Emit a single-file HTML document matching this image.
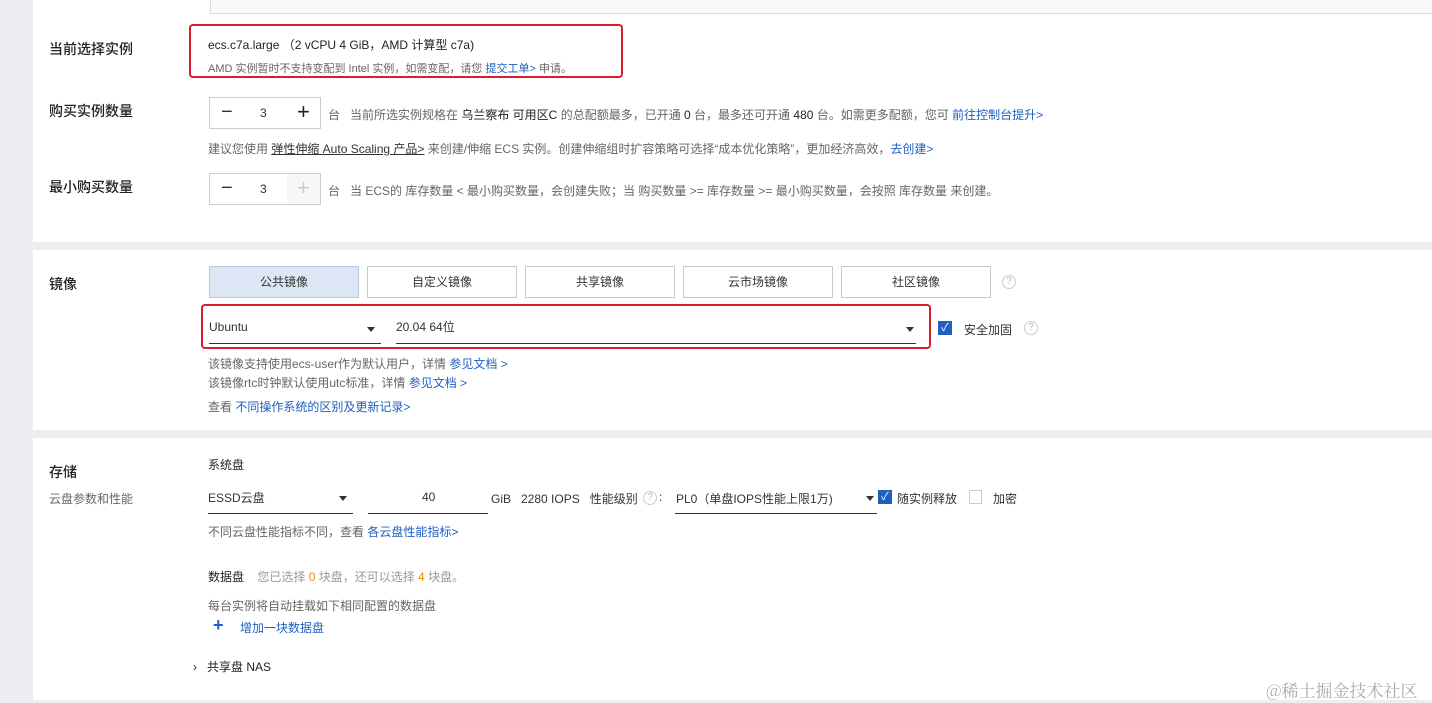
<!DOCTYPE html>
<html><head><meta charset="utf-8"><style>
*{margin:0;padding:0;box-sizing:border-box}
body{width:1432px;height:703px;background:#eceef1;position:relative;overflow:hidden;font-family:"Liberation Sans","Noto Sans CJK SC",sans-serif;color:#333;font-size:12px}
.p{position:absolute;left:33px;width:1399px;background:#fff}
.a{position:absolute;white-space:nowrap}
.lbl{font-size:14px;color:#222;font-weight:500}
.g{color:#666}
.b{color:#1f5fbf}
.btn{position:absolute;height:32px;border:1px solid #c8c8c8;background:#fff;text-align:center;line-height:30px;font-size:12px;color:#333}
.sel{position:absolute;border-bottom:1px solid #333;height:30px;line-height:26px;font-size:12px}
.tri{position:absolute;width:0;height:0;border-left:4px solid transparent;border-right:4px solid transparent;border-top:5px solid #333}
.q{position:absolute;width:14px;height:14px;border:1px solid #ccc;border-radius:50%;font-size:10px;color:#bbb;text-align:center;line-height:12px}
.cb{position:absolute;width:14px;height:14px;background:#1f5fbf;color:#fff;font-size:11px;line-height:14px;text-align:center}
.red{position:absolute;border:2px solid #d9202a;border-radius:4px}
</style></head><body>
<div class="p" style="top:0;height:242px">
  <div class="a" style="left:177px;top:-2px;width:1230px;height:16px;border:1px solid #ddd;border-top:none;background:#fafafa"></div>
  <div class="a lbl" style="left:16px;top:39px">当前选择实例</div>
  <div class="a" style="left:175px;top:36px;font-size:12px;color:#222">ecs.c7a.large （2 vCPU 4 GiB，AMD 计算型 c7a)</div>
  <div class="a g" style="left:175px;top:60px;font-size:11px">AMD 实例暂时不支持变配到 Intel 实例，如需变配，请您 <span class="b">提交工单&gt;</span> 申请。</div>
  <div class="red" style="left:156px;top:24px;width:434px;height:54px"></div>

  <div class="a lbl" style="left:16px;top:101px">购买实例数量</div>
  <div class="a" style="left:176px;top:97px;width:112px;height:32px;border:1px solid #ccc"></div>
  <div class="a" style="left:188px;top:101px;font-size:20px;color:#333">−</div>
  <div class="a" style="left:227px;top:106px">3</div>
  <div class="a" style="left:264px;top:99px;font-size:22px;color:#222">+</div>
  <div class="a g" style="left:295px;top:106px">台 &nbsp;&nbsp;当前所选实例规格在 <span style="color:#222">乌兰察布 可用区C</span> 的总配额最多，已开通 <span style="color:#222">0</span> 台，最多还可开通 <span style="color:#222">480</span> 台。如需更多配额，您可 <span class="b">前往控制台提升&gt;</span></div>
  <div class="a g" style="left:175px;top:140px">建议您使用 <span style="text-decoration:underline;color:#333">弹性伸缩 Auto Scaling 产品&gt;</span> 来创建/伸缩 ECS 实例。创建伸缩组时扩容策略可选择“成本优化策略”，更加经济高效，<span class="b">去创建&gt;</span></div>

  <div class="a lbl" style="left:16px;top:177px">最小购买数量</div>
  <div class="a" style="left:176px;top:173px;width:112px;height:32px;border:1px solid #ccc"></div>
  <div class="a" style="left:254px;top:174px;width:33px;height:30px;background:#f7f7f7"></div>
  <div class="a" style="left:188px;top:177px;font-size:20px;color:#333">−</div>
  <div class="a" style="left:227px;top:182px">3</div>
  <div class="a" style="left:264px;top:175px;font-size:22px;color:#ccc">+</div>
  <div class="a g" style="left:295px;top:182px">台 &nbsp;&nbsp;当 ECS的 库存数量 &lt; 最小购买数量，会创建失败；当 购买数量 &gt;= 库存数量 &gt;= 最小购买数量，会按照 库存数量 来创建。</div>
</div>

<div class="p" style="top:250px;height:180px">
  <div class="a lbl" style="left:16px;top:24px">镜像</div>
  <div class="btn" style="left:176px;top:16px;width:150px;background:#dde6f4;border-color:#b8c8e0">公共镜像</div>
  <div class="btn" style="left:334px;top:16px;width:150px">自定义镜像</div>
  <div class="btn" style="left:492px;top:16px;width:150px">共享镜像</div>
  <div class="btn" style="left:650px;top:16px;width:150px">云市场镜像</div>
  <div class="btn" style="left:808px;top:16px;width:150px">社区镜像</div>
  <div class="q" style="left:969px;top:25px">?</div>
  <div class="red" style="left:168px;top:54px;width:730px;height:45px"></div>
  <div class="sel" style="left:176px;top:64px;width:172px">Ubuntu</div>
  <div class="tri" style="left:334px;top:77px"></div>
  <div class="sel" style="left:363px;top:64px;width:520px">20.04 64位</div>
  <div class="tri" style="left:873px;top:77px"></div>
  <div class="cb" style="left:905px;top:71px">✓</div>
  <div class="a" style="left:931px;top:71px">安全加固</div>
  <div class="q" style="left:991px;top:71px">?</div>
  <div class="a g" style="left:175px;top:105px">该镜像支持使用ecs-user作为默认用户，详情 <span class="b">参见文档 &gt;</span></div>
  <div class="a g" style="left:175px;top:124px">该镜像rtc时钟默认使用utc标准，详情 <span class="b">参见文档 &gt;</span></div>
  <div class="a g" style="left:175px;top:148px">查看 <span class="b">不同操作系统的区别及更新记录&gt;</span></div>
</div>

<div class="p" style="top:438px;height:262px">
  <div class="a lbl" style="left:16px;top:24px">存储</div>
  <div class="a g" style="left:16px;top:52px">云盘参数和性能</div>
  <div class="a" style="left:175px;top:18px;color:#222">系统盘</div>
  <div class="a" style="left:175px;top:51px">ESSD云盘</div>
  <div class="a" style="left:175px;top:75px;width:145px;border-bottom:1px solid #333"></div>
  <div class="tri" style="left:306px;top:58px"></div>
  <div class="a" style="left:335px;top:75px;width:120px;border-bottom:1px solid #333"></div>
  <div class="a" style="left:389px;top:52px">40</div>
  <div class="a" style="left:458px;top:52px">GiB &nbsp;&nbsp;2280 IOPS &nbsp;&nbsp;性能级别</div>
  <div class="q" style="left:610px;top:53px">?</div>
  <div class="a" style="left:626px;top:52px">:</div>
  <div class="a" style="left:643px;top:52px">PL0（单盘IOPS性能上限1万)</div>
  <div class="a" style="left:642px;top:75px;width:202px;border-bottom:1px solid #333"></div>
  <div class="tri" style="left:833px;top:58px"></div>
  <div class="cb" style="left:845px;top:52px">✓</div>
  <div class="a" style="left:864px;top:52px">随实例释放</div>
  <div class="a" style="left:936px;top:52px;width:13px;height:14px;border:1px solid #ccc"></div>
  <div class="a" style="left:960px;top:52px">加密</div>
  <div class="a g" style="left:175px;top:85px">不同云盘性能指标不同，查看 <span class="b">各云盘性能指标&gt;</span></div>
  <div class="a" style="left:175px;top:130px;color:#222">数据盘 <span style="color:#999">&nbsp;&nbsp;&nbsp;您已选择 <span style="color:#f08a00">0</span> 块盘，还可以选择 <span style="color:#f08a00">4</span> 块盘。</span></div>
  <div class="a g" style="left:175px;top:159px">每台实例将自动挂载如下相同配置的数据盘</div>
  <div class="a b" style="left:180px;top:177px;font-size:18px;font-weight:bold">+</div>
  <div class="a b" style="left:207px;top:181px">增加一块数据盘</div>
  <div class="a" style="left:160px;top:220px;color:#222">›&nbsp;&nbsp; 共享盘 NAS</div>
  <div class="a" style="left:1233px;top:239px;color:#aaa;font-size:17px;font-family:'Noto Serif CJK SC',serif">@稀土掘金技术社区</div>
</div>
</body></html>
